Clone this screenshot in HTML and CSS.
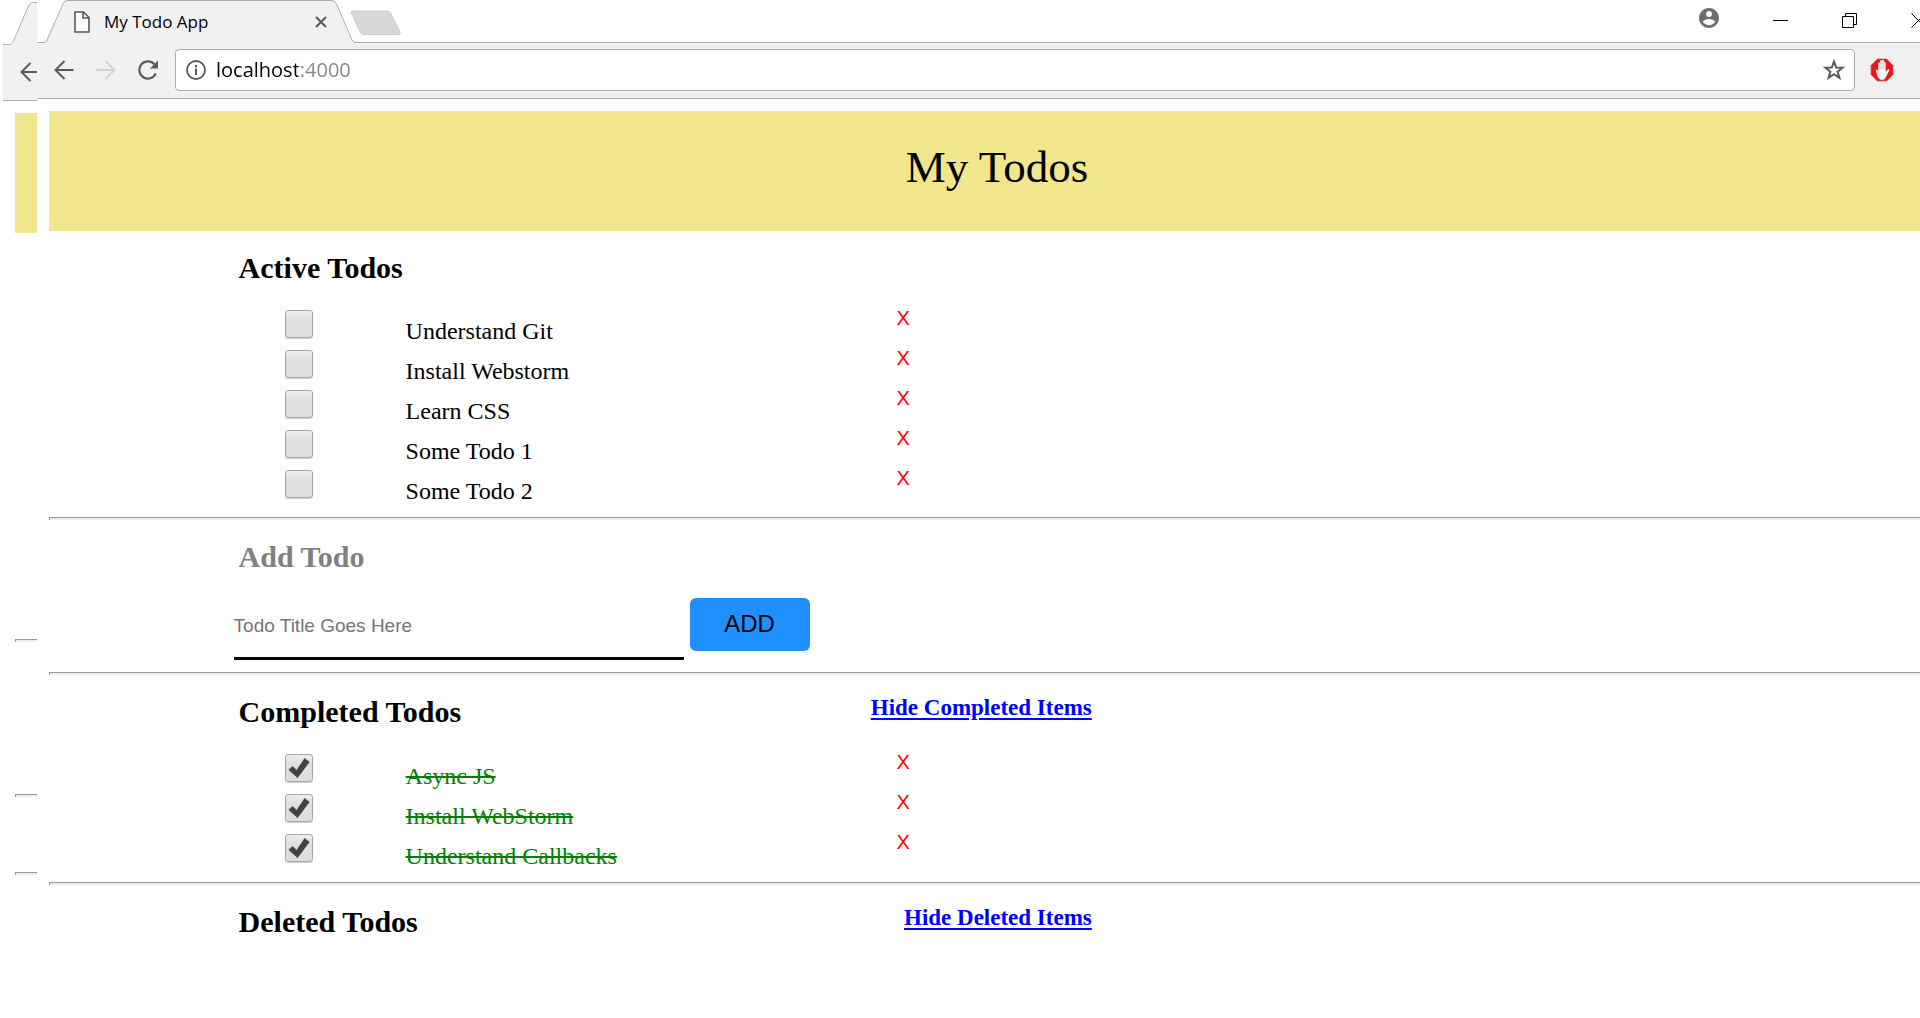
FILE: index.html
```html
<!DOCTYPE html>
<html lang="en">
<head>
<meta charset="utf-8">
<title>My Todo App</title>
<link rel="stylesheet" href="styles.css">
</head>
<body>
<svg class="sprite" aria-hidden="true">
  <symbol id="arrow-left" viewBox="0 0 20 20"><path d="M19.5 10H1.5M10.5 1L1.5 10l9 9" fill="none" stroke="currentColor" stroke-width="2"/></symbol>
  <symbol id="arrow-right" viewBox="0 0 20 20"><path d="M.5 10h18M9.500 1l9 9-9 9" fill="none" stroke="currentColor" stroke-width="2"/></symbol>
</svg>
<div class="screen">
  <div class="window-behind" aria-hidden="true">
    <div class="behind-strip">
      <svg class="behind-tab" width="34" height="45" viewBox="0 0 34 45"><path d="M0 44.500H7Q9 44.500 10 42L25.500 6Q27 2.500 29.500 2.500H36V46H0Z" fill="#f1f1f1" stroke="#b0b0b0"/></svg>
    </div>
    <div class="behind-toolbar"><svg class="nav-icon"><use href="#arrow-left"/></svg></div>
    <div class="behind-page">
      <div class="behind-banner"></div>
      <hr class="behind-rule-active">
      <hr class="behind-rule-add">
      <hr class="behind-rule-done">
    </div>
  </div>

  <div class="window">
    <header class="tab-strip">
      <div class="tab">
        <svg class="tab-shape" width="320" height="43" viewBox="0 0 320 43"><path d="M0 42.500H7Q9 42.500 10 40L26 4Q27.500 .5 30 .5H295Q298 .5 299.500 4L315 40Q316.500 42.500 319 42.500" fill="#f1f1f1" stroke="#adadad"/><path d="M8 42.500H317" stroke="#f1f1f1"/></svg>
        <svg class="page-icon" width="16" height="22" viewBox="0 0 16 22"><path d="M1 1h8.500L15 6.500V21H1ZM9 1v6h6" fill="#fff" stroke="#5a5a5a" stroke-width="1.600"/></svg>
        <span class="tab-title">My Todo App</span>
        <button class="tab-close" aria-label="Close tab"><svg width="12" height="12" viewBox="0 0 12 12"><path d="M1 1l10 10M11 1L1 11" stroke="#5a5a5a" stroke-width="2"/></svg></button>
      </div>
      <button class="new-tab" aria-label="New tab"><svg width="52" height="26" viewBox="0 0 52 26"><path d="M3 1H37.500Q39.500 1 40.500 3L50 22Q51 24.500 48.500 24.500H13.500Q11.500 24.500 10.500 22.500L1.500 3.500Q.5 1 3 1Z" fill="#d8d8d8" stroke="#ccc"/></svg></button>
      <div class="window-controls">
        <button aria-label="Profile"><svg width="20" height="20" viewBox="2 2 20 20"><path fill="#6e6e6e" d="M12 2C6.480 2 2 6.480 2 12s4.480 10 10 10 10-4.480 10-10S17.520 2 12 2zm0 3c1.660 0 3 1.340 3 3s-1.340 3-3 3-3-1.340-3-3 1.340-3 3-3zm0 14.200c-2.500 0-4.710-1.280-6-3.220.030-1.990 4-3.080 6-3.080 1.990 0 5.970 1.090 6 3.080-1.290 1.940-3.500 3.220-6 3.220z"/></svg></button>
        <button aria-label="Minimize"><svg width="15" height="15" viewBox="0 0 15 15"><path d="M0 7.500h15" stroke="#000"/></svg></button>
        <button aria-label="Restore"><svg width="15" height="15" viewBox="0 0 15 15"><path d="M.5 3.500h11v11H.5zM3.500 3.500v-3h11v11h-3" fill="none" stroke="#000"/></svg></button>
        <button aria-label="Close"><svg width="15" height="15" viewBox="0 0 15 15"><path d="M.5 .5l14 14M14.500 .5l-14 14" stroke="#000"/></svg></button>
      </div>
    </header>

    <div class="toolbar">
      <div class="nav">
        <button aria-label="Back"><svg class="nav-icon"><use href="#arrow-left"/></svg></button>
        <button aria-label="Forward" disabled><svg class="nav-icon"><use href="#arrow-right"/></svg></button>
        <button aria-label="Reload"><svg class="nav-icon" viewBox="0 0 20 20"><path d="M17.800 13.500A8.600 8.600 0 1 1 16.500 4.400" fill="none" stroke="currentColor" stroke-width="2.200"/><path d="M20 .5V8.500H12Z" fill="currentColor"/></svg></button>
      </div>
      <div class="address">
        <svg width="20" height="20" viewBox="0 0 20 20"><circle cx="10" cy="10" r="9" fill="none" stroke="#5a5a5a" stroke-width="1.800"/><path d="M10 8.500V15M10 5v2.200" stroke="#5a5a5a" stroke-width="2"/></svg>
        <input type="text" value="localhost:4000" aria-label="Address">
        <button aria-label="Bookmark this page"><svg width="22" height="22" viewBox="0 0 22 22"><path d="M11 2.500l2.200 6 6.400.2-5 3.900 1.800 6.200L11 15.200l-5.400 3.600 1.800-6.200-5-3.900 6.400-.2Z" fill="none" stroke="#5a5a5a" stroke-width="2"/></svg></button>
      </div>
      <button class="blocker" aria-label="Ad blocker"><svg width="24" height="24" viewBox="0 0 24 24"><path d="M7.300 .8h9.400L23.200 7.300v9.400l-6.500 6.500H7.300L.8 16.700V7.300Z" fill="#e8151b" stroke="#c4bcbc" stroke-width=".6"/><path d="M12 22c-2.800-.3-4-2.200-4.700-4.500L5.900 12.500c-.2-1.200 1.200-1.500 1.600-.5l.8 1.800V5.300c0-1.300 1.600-1.300 1.700 0V3.200c.1-1.300 1.900-1.300 2 0v-.5c.1-1.300 1.900-1.300 2 0v2c.1-1.300 1.700-1.200 1.700 0v8.800l2-2c1-.8 2 .1 1.400 1.200L16 19c-.9 1.900-2 3-4 3Z" fill="#f4f4f4"/><path d="M10.100 5v6M12.100 4v7M14.100 5v6" stroke="#c9b5b5" stroke-width=".6"/></svg></button>
    </div>

    <main class="page">
      <h1 class="banner">My Todos</h1>

      <section class="section">
        <div class="section-head"><h2>Active Todos</h2></div>
        <ul class="todos">
          <li><input type="checkbox" id="a1"><label for="a1">Understand Git</label><button aria-label="Delete Understand Git">X</button></li>
          <li><input type="checkbox" id="a2"><label for="a2">Install Webstorm</label><button aria-label="Delete Install Webstorm">X</button></li>
          <li><input type="checkbox" id="a3"><label for="a3">Learn CSS</label><button aria-label="Delete Learn CSS">X</button></li>
          <li><input type="checkbox" id="a4"><label for="a4">Some Todo 1</label><button aria-label="Delete Some Todo 1">X</button></li>
          <li><input type="checkbox" id="a5"><label for="a5">Some Todo 2</label><button aria-label="Delete Some Todo 2">X</button></li>
        </ul>
      </section>
      <hr>

      <section class="section">
        <div class="section-head"><h2 class="muted">Add Todo</h2></div>
        <form class="add-form" onsubmit="return false">
          <input type="text" placeholder="Todo Title Goes Here" aria-label="Todo title">
          <button type="submit">ADD</button>
        </form>
      </section>
      <hr>

      <section class="section">
        <div class="section-head"><h2>Completed Todos</h2><a href="#completed">Hide Completed Items</a></div>
        <ul class="todos done" id="completed">
          <li><input type="checkbox" id="c1" checked><label for="c1">Async JS</label><button aria-label="Delete Async JS">X</button></li>
          <li><input type="checkbox" id="c2" checked><label for="c2">Install WebStorm</label><button aria-label="Delete Install WebStorm">X</button></li>
          <li><input type="checkbox" id="c3" checked><label for="c3">Understand Callbacks</label><button aria-label="Delete Understand Callbacks">X</button></li>
        </ul>
      </section>
      <hr>

      <section class="section" id="deleted">
        <div class="section-head"><h2>Deleted Todos</h2><a href="#deleted">Hide Deleted Items</a></div>
      </section>
    </main>
  </div>
</div>
</body>
</html>
```

FILE: styles.css
```css
* { box-sizing: border-box; }

body {
  margin: 0;
  background: #fff;
  color: #000;
  font-family: "Liberation Serif", "Times New Roman", serif;
  overflow: hidden;
}

button {
  margin: 0;
  padding: 0;
  border: 0;
  background: none;
  color: inherit;
}

svg { display: block; }

.sprite {
  position: absolute;
  width: 0;
  height: 0;
}

.screen {
  display: flex;
  min-height: 100vh;
  padding-left: 3px;
}

hr {
  height: 3px;
  margin: 0;
  border: 0 solid #9a9a9a;
  border-top-width: 1px;
  border-left-width: 1px;
  background: #eee;
}

.nav-icon {
  flex: none;
  width: 20px;
  height: 20px;
}

/* Window peeking out at the left */
.window-behind {
  flex: 0 0 34px;
  overflow: hidden;
}

.behind-toolbar {
  display: flex;
  align-items: center;
  height: 56px;
  padding: 0 0 2px 17px;
  border-bottom: 1px solid #adadad;
  background: #f1f1f1;
  color: #5a5a5a;
}

.behind-page { padding: 12px 0 0 12px; }

.behind-banner {
  height: 120px;
  background: khaki;
}

.behind-rule-active { margin-top: 406px; }
.behind-rule-add { margin-top: 152px; }
.behind-rule-done { margin-top: 75px; }

/* Front window */
.window {
  flex: 0 0 100vw;
  min-width: 0;
}

.tab-strip {
  display: flex;
  height: 43px;
  border-bottom: 1px solid #adadad;
}

.tab {
  position: relative;
  display: flex;
  align-items: center;
  width: 320px;
  height: 43px;
  padding: 0 30px 0 37px;
}

.tab-shape {
  position: absolute;
  top: 0;
  left: 0;
}

.page-icon,
.tab-title,
.tab-close { position: relative; }

.tab-title {
  flex: 1;
  padding-left: 14px;
  font: 17px/24px "Open Sans", "Noto Sans", sans-serif;
}

.new-tab {
  align-self: flex-start;
  padding: 10px 0 0;
  margin-left: -7px;
}

.window-controls {
  display: flex;
  align-items: center;
  gap: 54px;
  margin-left: auto;
  padding: 0 31px 2px 0;
}

.window-controls button:first-child { padding-bottom: 4px; }

.toolbar {
  display: flex;
  align-items: center;
  height: 56px;
  padding: 0 63px 2px 17px;
  border-bottom: 1px solid #adadad;
  background: #f1f1f1;
  color: #5a5a5a;
}

.nav {
  display: flex;
  gap: 22px;
}

.nav button:disabled { color: #d2d2d2; }

.address {
  display: flex;
  flex: 1;
  align-items: center;
  height: 42px;
  margin: 0 15px 0 17px;
  padding: 0 9px 0 10px;
  border: 1px solid #adadad;
  border-radius: 4px;
  background: #fff;
}

/* Host name in black, port in grey */
.address input {
  flex: 1;
  min-width: 0;
  height: 32px;
  padding: 0 0 0 10px;
  border: 0;
  outline: 0;
  background: linear-gradient(90deg, #000 92px, #858585 92px);
  background-clip: text;
  color: transparent;
  font: 20px/32px "Open Sans", "Noto Sans", sans-serif;
}

/* Todo page */
.page { padding: 12px; }

.banner {
  margin: 0;
  padding: 30px 0 38px;
  background: khaki;
  font-size: 45px;
  font-weight: 400;
  line-height: 52px;
  text-align: center;
}

.section {
  width: 55%;
  padding: 19px 0 0 calc(10% - 5px);
}

.section-head {
  display: flex;
  align-items: flex-start;
  justify-content: space-between;
  padding-left: 5px;
}

h2 {
  margin: 0;
  font-size: 30px;
  line-height: 36px;
}

.muted { color: gray; }

.section-head a {
  color: #00f;
  font-size: 23px;
  font-weight: 700;
  line-height: 28px;
  text-decoration-thickness: 2px;
  text-underline-offset: 3px;
}

.todos {
  margin: 0;
  padding: 24px 0 7px 51px;
  list-style: none;
}

.todos.done { padding-bottom: 8px; }

.todos li {
  display: flex;
  align-items: flex-start;
  height: 40px;
}

.todos input {
  flex: none;
  appearance: none;
  width: 28px;
  height: 28px;
  margin: 0;
  border: 1px solid #a9a9a9;
  border-radius: 3px;
  background: linear-gradient(#eee, #ddd 40%, #dedede);
  box-shadow: 0 1px 1px #ccc;
}

.todos input:checked::before {
  content: "";
  display: block;
  width: 26px;
  height: 26px;
  background: #434343;
  clip-path: polygon(3px 15px, 7px 11px, 11px 15px, 19px 3px, 24px 7px, 12px 23px);
}

.todos label {
  flex: 0 0 491px;
  margin-left: 93px;
  padding-top: 8px;
  font-size: 24px;
  line-height: 26px;
}

.todos button {
  color: red;
  font: 20px/16px "Liberation Sans", Arial, sans-serif;
}

.done label {
  color: green;
  line-height: 28px;
  text-decoration: line-through 2px;
}

.add-form {
  display: flex;
  align-items: baseline;
  gap: 6px;
  padding: 19px 0 12px;
}

.add-form input {
  width: 450px;
  padding: 20px 0;
  border: 0;
  border-bottom: 3px solid #000;
  outline: 0;
  font: 19px/23px "Liberation Sans", Arial, sans-serif;
}

.add-form input::placeholder { color: #757575; }

.add-form button {
  width: 120px;
  height: 53px;
  border-radius: 6px;
  background: dodgerblue;
  color: #000;
  font: 24px/28px "Liberation Sans", Arial, sans-serif;
}
```
